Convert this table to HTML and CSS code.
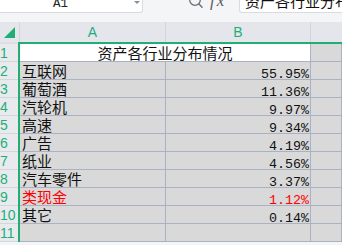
FILE: index.html
```html
<!DOCTYPE html>
<html lang="zh">
<head>
<meta charset="utf-8">
<link rel="stylesheet" href="styles.css">
</head>
<body>
<div class="app">
  <div class="fbar">
    <div class="namebox"><span class="ref">A1</span><span class="caret"></span></div>
    <div class="tools">
      <svg class="mag" width="16" height="10" viewBox="0 0 16 10"><circle cx="7" cy="0" r="5.3" fill="none" stroke="#6b6f75" stroke-width="1.3"/><line x1="10.8" y1="3.8" x2="14.5" y2="7.8" stroke="#6b6f75" stroke-width="1.4"/></svg>
      <span class="fx">fx</span>
    </div>
    <div class="fbox"><span class="ftext">资产各行业分布情况</span></div>
  </div>
  <div class="colhead">
    <div class="corner"><svg width="20" height="20" viewBox="0 0 20 20"><polygon points="4,16 15,16 15,5" fill="#21ad74"/></svg></div>
    <div class="ch">A</div>
    <div class="ch">B</div>
    <div class="ch last"></div>
  </div>
  <div class="sheet">
    <div class="rowheads">
      <div class="rtop"></div>
      <div class="rh">1</div>
      <div class="rh">2</div>
      <div class="rh">3</div>
      <div class="rh">4</div>
      <div class="rh">5</div>
      <div class="rh">6</div>
      <div class="rh">7</div>
      <div class="rh">8</div>
      <div class="rh">9</div>
      <div class="rh">10</div>
      <div class="rh">11</div>
    </div>
    <div class="cells">
      <div class="cell title">资产各行业分布情况</div><div class="cell"></div>
      <div class="cell">互联网</div><div class="cell num">55.95%</div><div class="cell"></div>
      <div class="cell">葡萄酒</div><div class="cell num">11.36%</div><div class="cell"></div>
      <div class="cell">汽轮机</div><div class="cell num">9.97%</div><div class="cell"></div>
      <div class="cell">高速</div><div class="cell num">9.34%</div><div class="cell"></div>
      <div class="cell">广告</div><div class="cell num">4.19%</div><div class="cell"></div>
      <div class="cell">纸业</div><div class="cell num">4.56%</div><div class="cell"></div>
      <div class="cell">汽车零件</div><div class="cell num">3.37%</div><div class="cell"></div>
      <div class="cell red">类现金</div><div class="cell num red">1.12%</div><div class="cell"></div>
      <div class="cell">其它</div><div class="cell num">0.14%</div><div class="cell"></div>
      <div class="cell"></div><div class="cell"></div><div class="cell"></div>
    </div>
  </div>
</div>
</body>
</html>
```

FILE: styles.css
```css
html, body {
  margin: 0;
  padding: 0;
  background: #f4f5f7;
}
.app {
  width: 342px;
  height: 245px;
  overflow: hidden;
  font-family: "Noto Sans CJK SC", sans-serif;
}
.fbar {
  height: 22px;
  display: flex;
  align-items: flex-start;
  background: #f4f5f7;
}
.namebox {
  width: 143px;
  height: 13px;
  box-sizing: border-box;
  background: #fff;
  border-right: 1px solid #d8dbe0;
  border-bottom: 1px solid #d8dbe0;
  border-bottom-right-radius: 3px;
  overflow: hidden;
  position: relative;
  flex: none;
}
.ref {
  display: block;
  margin: -2px 0 0 53px;
  font: 12.5px/13px "Liberation Mono", monospace;
  color: #222;
}
.caret {
  position: absolute;
  left: 134px;
  top: 1px;
  width: 0;
  height: 0;
  border-left: 3px solid transparent;
  border-right: 3px solid transparent;
  border-top: 3px solid #8a8d92;
}
.tools {
  width: 96px;
  height: 13px;
  display: flex;
  align-items: flex-start;
  padding-left: 45px;
  box-sizing: border-box;
  overflow: hidden;
  flex: none;
}
.mag {
  flex: none;
}
.fx {
  margin: -8px 0 0 6px;
  font: italic 17px/17px "Liberation Serif", serif;
  letter-spacing: 2px;
  color: #5a5e64;
}
.fbox {
  flex: 1;
  height: 13px;
  box-sizing: border-box;
  background: #fff;
  border-left: 1px solid #d8dbe0;
  border-bottom: 1px solid #d8dbe0;
  border-bottom-left-radius: 3px;
  overflow: hidden;
  white-space: nowrap;
}
.ftext {
  display: block;
  margin: -7px 0 0 5px;
  font-size: 15px;
  line-height: 15px;
  color: #111;
}
.colhead {
  height: 20px;
  display: grid;
  grid-template-columns: 20px 146px 145px 1fr;
  background: #e4e6eb;
}
.corner, .ch {
  border-right: 1px solid #d2d6dc;
  box-sizing: border-box;
  height: 20px;
}
.ch {
  text-align: center;
  font: 14px/20px "Liberation Sans", sans-serif;
  color: #1fae7b;
}
.ch.last {
  border-right: none;
}
.corner svg {
  display: block;
}
.sheet {
  display: flex;
}
.rowheads {
  width: 18px;
  flex: none;
  background: #e8eaee;
}
.rtop {
  height: 2px;
  background: #dcdfe4;
}
.rh {
  height: 18px;
  box-sizing: border-box;
  border-bottom: 1px solid #d3d7dd;
  padding-top: 1px;
  font: 14px/17px "Liberation Sans Narrow", "Liberation Sans", sans-serif;
  color: #1fae7b;
  white-space: nowrap;
}
.cells {
  flex: 1;
  display: grid;
  grid-template-columns: 146px 145px 1fr;
  grid-auto-rows: 18px;
  border-left: 2px solid #21ad74;
  border-top: 2px solid #21ad74;
  background: #d9d9d9;
}
.cell {
  height: 18px;
  box-sizing: border-box;
  border-right: 1px solid #a9b1c2;
  border-bottom: 1px solid #a9b1c2;
  background: #d9d9d9;
  padding: 0 2px;
  font-size: 15px;
  line-height: 17px;
  color: #111;
  white-space: nowrap;
}
.cell.title {
  grid-column: span 2;
  background: #fff;
  text-align: center;
}
.cell.num {
  text-align: right;
  font: 13.33px/13px "Liberation Mono", monospace;
  padding-top: 6px;
  padding-right: 1px;
}
.cell.red {
  color: #f00;
}
```
